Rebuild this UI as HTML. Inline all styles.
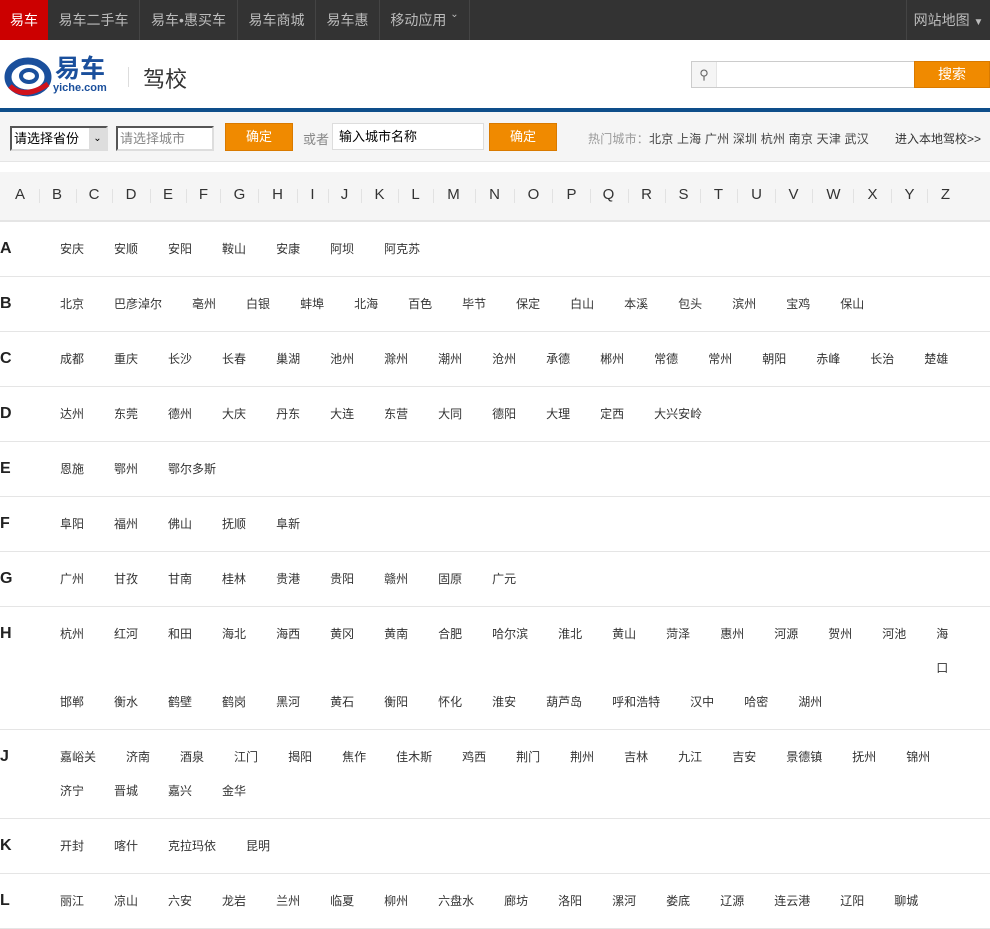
<!DOCTYPE html>
<html><head><meta charset="utf-8"><style>
*{margin:0;padding:0;box-sizing:border-box}
body{width:990px;height:900px;overflow:hidden;background:#fff;font-family:"Liberation Sans","Noto Sans CJK SC",sans-serif;color:#333;font-size:12px}
.nav{height:40px;background:#333;position:relative}
.nav a{position:absolute;top:0;height:40px;line-height:40px;color:#bbb;font-size:14px;text-align:center;border-right:1px solid #444}
.hd{height:68px;position:relative}
.blue{height:4px;background:#0e4e8a}
.filter{height:50px;background:#f5f5f5;border-bottom:1px solid #e5e5e5;position:relative}
.filter>*{position:absolute}
.btn{background:#f08a00;border:1px solid #d97a00;color:#fff;font-size:13px;text-align:center}
.alpha{margin-top:10px;height:50px;background:#f5f5f5;border-bottom:2px solid #e5e5e5;position:relative}
.alpha span{position:absolute;top:0;width:37px;text-align:center;line-height:46px;font-size:15px;color:#333}
.alpha i{position:absolute;top:17px;width:1px;height:14px;background:#e2e2e2}
.row{border-bottom:1px solid #e5e5e5;padding:10px 0;position:relative}
.row b{position:absolute;left:0;top:10px;line-height:34px;font-size:16px;color:#222}
.row ul{list-style:none;margin-left:60px;width:892px;display:flex;flex-wrap:wrap;column-gap:30px}
.row li{line-height:34px;font-size:12px;color:#333;height:34px}
</style></head><body>
<div class="nav">
<a style="left:0;width:48px;background:#c00;color:#fff;border:0">易车</a>
<a style="left:48px;width:92px">易车二手车</a>
<a style="left:140px;width:98px">易车•惠买车</a>
<a style="left:238px;width:78px">易车商城</a>
<a style="left:316px;width:64px">易车惠</a>
<a style="left:380px;width:90px">移动应用 <span style="font-size:10px;vertical-align:top;line-height:30px">&#8964;</span></a>
<a style="left:906px;width:84px;border-left:1px solid #444;border-right:0">网站地图 <span style="font-size:10px">&#9660;</span></a>
</div>
<div class="hd">
<svg style="position:absolute;left:4px;top:16px" width="50" height="42" viewBox="0 0 50 42"><ellipse cx="24" cy="21" rx="20" ry="16" fill="none" stroke="#1a4f9c" stroke-width="7"/><path d="M6 30 Q20 44 44 28" fill="none" stroke="#d0121b" stroke-width="5"/><ellipse cx="25" cy="20" rx="8" ry="6" fill="none" stroke="#1a4f9c" stroke-width="4"/></svg>
<div style="position:absolute;left:55px;top:14px;color:#1a4f9c;font-size:25px;font-weight:bold;line-height:30px">易车</div>
<div style="position:absolute;left:53px;top:42px;color:#1a4f9c;font-size:11px;font-weight:bold">yiche.com</div>
<div style="position:absolute;left:128px;top:27px;width:1px;height:20px;background:#ddd"></div>
<div style="position:absolute;left:143px;top:22px;font-size:22px;color:#333">驾校</div>
<div style="position:absolute;left:691px;top:21px;width:224px;height:27px;border:1px solid #ccc;background:#fff"><div style="width:25px;height:25px;background:#f5f5f5;border-right:1px solid #e5e5e5;text-align:center;line-height:25px;color:#666;font-size:13px">&#9906;</div></div>
<div class="btn" style="position:absolute;left:914px;top:21px;width:76px;height:27px;line-height:25px;font-size:14px">搜索</div>
</div>
<div class="blue"></div>
<div class="filter">
<div style="left:10px;top:14px;width:98px;height:25px;border:2px solid #555;border-right-color:#ddd;border-bottom-color:#ddd;background:#fff;font-size:13px;line-height:21px;padding-left:2px;color:#000">请选择省份<span style="position:absolute;right:0;top:0;width:17px;height:21px;background:#ddd;text-align:center;font-size:10px">&#8964;</span></div>
<div style="left:116px;top:14px;width:98px;height:25px;border:2px solid #555;border-right-color:#ddd;border-bottom-color:#ddd;background:#fff;font-size:13px;line-height:21px;padding-left:2px;color:#888">请选择城市</div>
<div class="btn" style="left:225px;top:11px;width:68px;height:28px;line-height:26px">确定</div>
<div style="left:303px;top:17px;color:#888;font-size:13px">或者</div>
<div style="left:332px;top:11px;width:152px;height:27px;border:1px solid #ddd;background:#fff;line-height:25px;padding-left:6px;font-size:13px;color:#000">输入城市名称</div>
<div class="btn" style="left:489px;top:11px;width:68px;height:28px;line-height:26px">确定</div>
<div style="left:588px;top:18px;color:#999;font-size:12px;letter-spacing:.2px">热门城市：<span style="color:#444">北京 上海 广州 深圳 杭州 南京 天津 武汉</span></div>
<div style="left:895px;top:18px;color:#333;font-size:12px">进入本地驾校&gt;&gt;</div>
</div>
<div class="alpha">
<span style="left:1.5px">A</span><span style="left:38.5px">B</span><span style="left:75.5px">C</span><span style="left:112.5px">D</span><span style="left:149.5px">E</span><span style="left:185px">F</span><span style="left:221px">G</span><span style="left:259px">H</span><span style="left:294px">I</span><span style="left:326px">J</span><span style="left:361px">K</span><span style="left:397px">L</span><span style="left:435px">M</span><span style="left:476px">N</span><span style="left:515px">O</span><span style="left:553px">P</span><span style="left:590px">Q</span><span style="left:628px">R</span><span style="left:665px">S</span><span style="left:700px">T</span><span style="left:738px">U</span><span style="left:775px">V</span><span style="left:815px">W</span><span style="left:854px">X</span><span style="left:891px">Y</span><span style="left:927px">Z</span>
<i style="left:39px"></i><i style="left:76px"></i><i style="left:112px"></i><i style="left:150px"></i><i style="left:186px"></i><i style="left:220px"></i><i style="left:258px"></i><i style="left:297px"></i><i style="left:328px"></i><i style="left:361px"></i><i style="left:398px"></i><i style="left:433px"></i><i style="left:475px"></i><i style="left:514px"></i><i style="left:552px"></i><i style="left:590px"></i><i style="left:628px"></i><i style="left:665px"></i><i style="left:700px"></i><i style="left:737px"></i><i style="left:775px"></i><i style="left:812px"></i><i style="left:853px"></i><i style="left:891px"></i><i style="left:927px"></i>
</div>
<div class="row"><b>A</b><ul><li>安庆</li><li>安顺</li><li>安阳</li><li>鞍山</li><li>安康</li><li>阿坝</li><li>阿克苏</li></ul></div>
<div class="row"><b>B</b><ul><li>北京</li><li>巴彦淖尔</li><li>亳州</li><li>白银</li><li>蚌埠</li><li>北海</li><li>百色</li><li>毕节</li><li>保定</li><li>白山</li><li>本溪</li><li>包头</li><li>滨州</li><li>宝鸡</li><li>保山</li></ul></div>
<div class="row"><b>C</b><ul><li>成都</li><li>重庆</li><li>长沙</li><li>长春</li><li>巢湖</li><li>池州</li><li>滁州</li><li>潮州</li><li>沧州</li><li>承德</li><li>郴州</li><li>常德</li><li>常州</li><li>朝阳</li><li>赤峰</li><li>长治</li><li>楚雄</li></ul></div>
<div class="row"><b>D</b><ul><li>达州</li><li>东莞</li><li>德州</li><li>大庆</li><li>丹东</li><li>大连</li><li>东营</li><li>大同</li><li>德阳</li><li>大理</li><li>定西</li><li>大兴安岭</li></ul></div>
<div class="row"><b>E</b><ul><li>恩施</li><li>鄂州</li><li>鄂尔多斯</li></ul></div>
<div class="row"><b>F</b><ul><li>阜阳</li><li>福州</li><li>佛山</li><li>抚顺</li><li>阜新</li></ul></div>
<div class="row"><b>G</b><ul><li>广州</li><li>甘孜</li><li>甘南</li><li>桂林</li><li>贵港</li><li>贵阳</li><li>赣州</li><li>固原</li><li>广元</li></ul></div>
<div class="row"><b>H</b><ul><li>杭州</li><li>红河</li><li>和田</li><li>海北</li><li>海西</li><li>黄冈</li><li>黄南</li><li>合肥</li><li>哈尔滨</li><li>淮北</li><li>黄山</li><li>菏泽</li><li>惠州</li><li>河源</li><li>贺州</li><li>河池</li><li style="width:12px;height:68px">海口</li><li style="flex-basis:100%;height:0"></li><li>邯郸</li><li>衡水</li><li>鹤壁</li><li>鹤岗</li><li>黑河</li><li>黄石</li><li>衡阳</li><li>怀化</li><li>淮安</li><li>葫芦岛</li><li>呼和浩特</li><li>汉中</li><li>哈密</li><li>湖州</li></ul></div>
<div class="row"><b>J</b><ul><li>嘉峪关</li><li>济南</li><li>酒泉</li><li>江门</li><li>揭阳</li><li>焦作</li><li>佳木斯</li><li>鸡西</li><li>荆门</li><li>荆州</li><li>吉林</li><li>九江</li><li>吉安</li><li>景德镇</li><li>抚州</li><li>锦州</li><li>济宁</li><li>晋城</li><li>嘉兴</li><li>金华</li></ul></div>
<div class="row"><b>K</b><ul><li>开封</li><li>喀什</li><li>克拉玛依</li><li>昆明</li></ul></div>
<div class="row"><b>L</b><ul><li>丽江</li><li>凉山</li><li>六安</li><li>龙岩</li><li>兰州</li><li>临夏</li><li>柳州</li><li>六盘水</li><li>廊坊</li><li>洛阳</li><li>漯河</li><li>娄底</li><li>辽源</li><li>连云港</li><li>辽阳</li><li>聊城</li></ul></div>
</body></html>
